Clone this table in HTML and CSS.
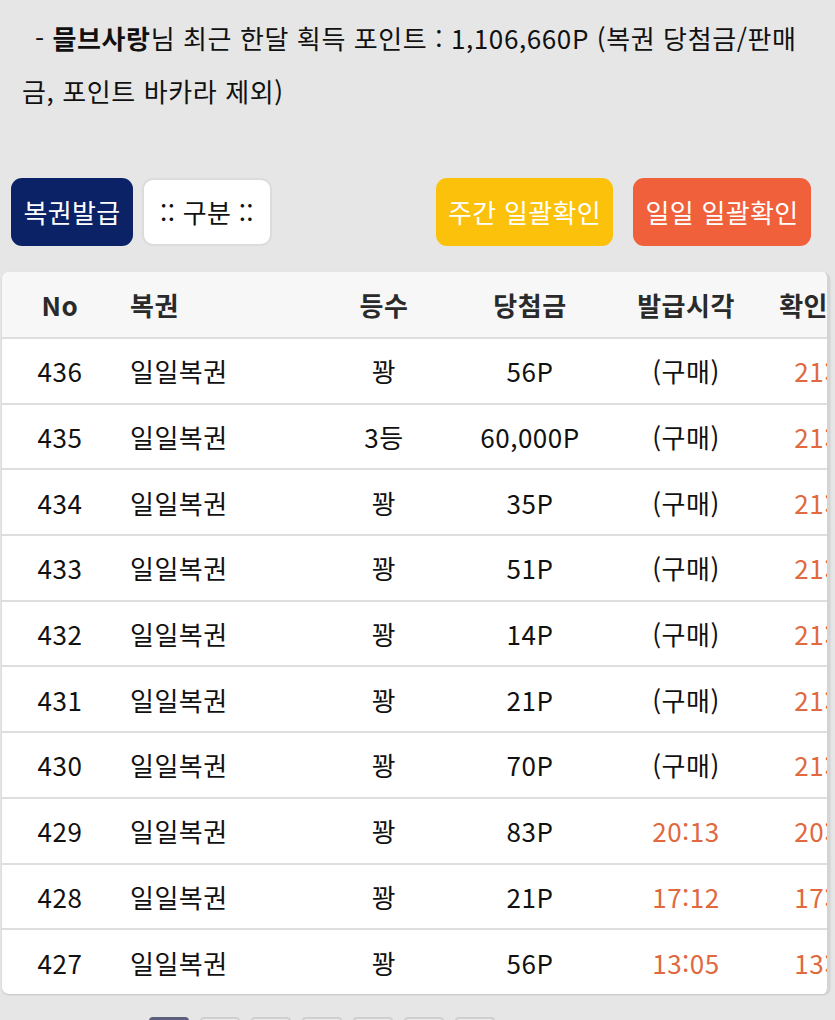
FILE: index.html
```html
<!DOCTYPE html>
<html lang="ko">
<head>
<meta charset="utf-8">
<link rel="stylesheet" href="styles.css">
</head>
<body>
<p class="summary">- <b>믈브사랑</b>님 최근 한달 획득 포인트 : 1,106,660P (복권 당첨금/판매금, 포인트 바카라 제외)</p>

<div class="toolbar">
  <div class="group">
    <button class="btn navy">복권발급</button>
    <button class="btn plain">:: 구분 ::</button>
  </div>
  <div class="group wide">
    <button class="btn yellow">주간 일괄확인</button>
    <button class="btn orange">일일 일괄확인</button>
  </div>
</div>

<div class="card">
  <div class="row head">
    <div class="c no">No</div><div class="c name">복권</div><div class="c">등수</div><div class="c">당첨금</div><div class="c">발급시각</div><div class="c last">확인시각</div>
  </div>
  <div class="row"><div class="c no">436</div><div class="c name">일일복권</div><div class="c">꽝</div><div class="c">56P</div><div class="c">(구매)</div><div class="c last time">21:12</div></div>
  <div class="row"><div class="c no">435</div><div class="c name">일일복권</div><div class="c">3등</div><div class="c">60,000P</div><div class="c">(구매)</div><div class="c last time">21:12</div></div>
  <div class="row"><div class="c no">434</div><div class="c name">일일복권</div><div class="c">꽝</div><div class="c">35P</div><div class="c">(구매)</div><div class="c last time">21:12</div></div>
  <div class="row"><div class="c no">433</div><div class="c name">일일복권</div><div class="c">꽝</div><div class="c">51P</div><div class="c">(구매)</div><div class="c last time">21:12</div></div>
  <div class="row"><div class="c no">432</div><div class="c name">일일복권</div><div class="c">꽝</div><div class="c">14P</div><div class="c">(구매)</div><div class="c last time">21:12</div></div>
  <div class="row"><div class="c no">431</div><div class="c name">일일복권</div><div class="c">꽝</div><div class="c">21P</div><div class="c">(구매)</div><div class="c last time">21:12</div></div>
  <div class="row"><div class="c no">430</div><div class="c name">일일복권</div><div class="c">꽝</div><div class="c">70P</div><div class="c">(구매)</div><div class="c last time">21:12</div></div>
  <div class="row"><div class="c no">429</div><div class="c name">일일복권</div><div class="c">꽝</div><div class="c">83P</div><div class="c time">20:13</div><div class="c last time">20:13</div></div>
  <div class="row"><div class="c no">428</div><div class="c name">일일복권</div><div class="c">꽝</div><div class="c">21P</div><div class="c time">17:12</div><div class="c last time">17:12</div></div>
  <div class="row"><div class="c no">427</div><div class="c name">일일복권</div><div class="c">꽝</div><div class="c">56P</div><div class="c time">13:05</div><div class="c last time">13:05</div></div>
</div>

<div class="pager">
  <span class="pg active"></span><span class="pg"></span><span class="pg"></span><span class="pg"></span><span class="pg"></span><span class="pg"></span><span class="pg"></span>
</div>
</body>
</html>
```
FILE: styles.css
```css
html, body {
  margin: 0;
  padding: 0;
  background: #e6e6e6;
  overflow: hidden;
}
body {
  font-family: "Noto Sans CJK KR", "Noto Sans", sans-serif;
  font-size: 26px;
  color: #111;
  width: 835px;
  height: 1020px;
}
.summary {
  margin: 0;
  padding: 11px 18px 0 22px;
  line-height: 53px;
  text-indent: 13px;
  letter-spacing: 0.6px;
}
.summary b { font-weight: 700; }
.toolbar {
  margin-top: 61px;
  padding: 0 24px 0 11px;
  display: flex;
  justify-content: space-between;
}
.group { display: flex; gap: 9px; }
.group.wide { gap: 20px; }
.btn {
  font-family: inherit;
  font-size: 26px;
  height: 68px;
  border: none;
  border-radius: 11px;
  color: #fff;
  padding: 0;
  line-height: 1;
  letter-spacing: 0.3px;
}
.navy { background: #0b2366; width: 122px; }
.plain { background: #fff; color: #111; width: 130px; border: 2px solid #dcdcdc; }
.yellow { background: #fcc10b; width: 177px; }
.orange { background: #f0603a; width: 178px; }
.card {
  margin: 26px 5px 0 2px;
  background: #fff;
  border-radius: 7px;
  overflow: hidden;
  box-shadow: 0 1px 2px rgba(0,0,0,0.15);
  border-right: 3px solid #d4d4d4;
}
.row {
  display: grid;
  grid-template-columns: 116px 212px 108px 184px 128px 156px;
  height: 65.7px;
  align-items: center;
  border-top: 2px solid #dedede;
  box-sizing: border-box;
  letter-spacing: 0.5px;
}
.row.head {
  height: 65px;
  border-top: none;
  background: #f7f7f7;
}
.c { text-align: center; white-space: nowrap; }
.c.name { text-align: left; padding-left: 12px; }
.head .c { font-weight: 700; color: #2a2a2a; }
.time { color: #e0693f; }
.pager {
  margin-top: 23px;
  padding-left: 149px;
  display: flex;
  gap: 11px;
}
.pg {
  width: 40px;
  height: 40px;
  border: 2px solid #cfcfcf;
  border-radius: 4px;
  background: #ececec;
  box-sizing: border-box;
}
.pg.active { background: #5b5f7c; border-color: #5b5f7c; }
```
